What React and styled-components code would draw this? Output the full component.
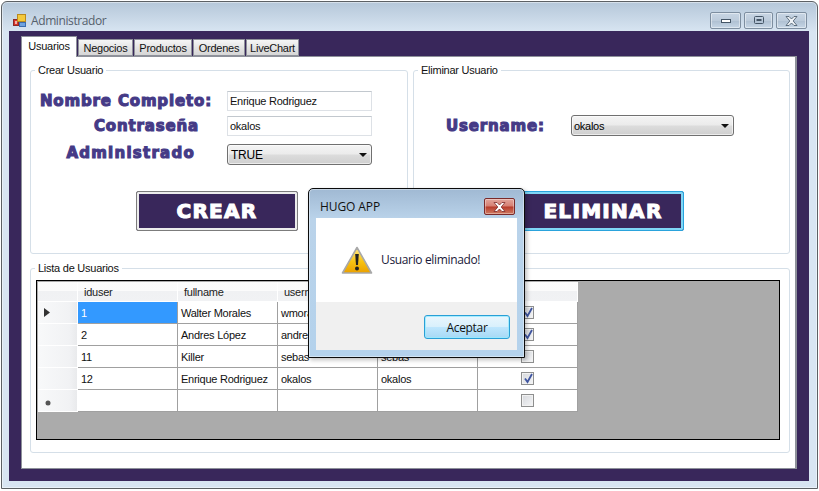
import React from "react";
import styled, { createGlobalStyle } from "styled-components";

const Global = createGlobalStyle`
  html, body { margin: 0; padding: 0; background: #fff; }
  * { box-sizing: border-box; }
  body { font-family: "Liberation Sans", Arial, sans-serif; font-size: 11px; letter-spacing: -.25px; color: #000; }
`;

const Page = styled.div`
  width: 819px; height: 491px; padding: 1px 0 0 1px; overflow: hidden; position: relative;
`;
const Win = styled.div`
  width: 817px; height: 488px; display: flex; flex-direction: column;
  border: 1px solid #5c6064; border-radius: 6px 6px 0 0;
  background: linear-gradient(#b5c7d9 0, #d8e5f2 30px, #d8e5f2 100%);
  box-shadow: inset 0 0 0 1px rgba(255,255,255,.45);
`;
const TitleBar = styled.div`
  height: 29px; flex: none; display: flex; align-items: center; padding: 8px 10px 0 11px;
`;
const TitleText = styled.span`
  font: 12px "Open Sans", sans-serif; letter-spacing: -.4px; color: #55606c; margin-left: 4px;
`;
const WinButtons = styled.div`
  margin-left: auto; display: flex; gap: 3px;
`;
const WinButton = styled.div`
  width: ${p => p.$w}px; height: 17px; display: flex; align-items: center; justify-content: center;
  border: 1px solid #7d8ea0; border-radius: 2px;
  background: linear-gradient(#c8d6e4 0, #bccbdb 50%, #aebfd1 51%, #c6d6e6 100%);
  box-shadow: inset 0 0 0 1px rgba(255,255,255,.45);
`;
const Client = styled.div`
  flex: none; height: 450px; margin: 0 8px 0 7px; background: #39275b;
  padding: 5px 12px 12px 12px; display: flex; flex-direction: column;
`;
const TabStrip = styled.div`
  display: flex; align-items: flex-end; height: 20px; flex: none; gap: 1px; position: relative; z-index: 1;
`;
const Tab = styled.div`
  height: ${p => (p.$active ? 21 : 17)}px; width: ${p => p.$w}px;
  display: flex; align-items: center; justify-content: center;
  border: 1px solid #8e919a; border-bottom: ${p => (p.$active ? "none" : "1px solid #8e919a")};
  background: ${p => (p.$active ? "#fff" : "linear-gradient(#f6f6f6, #e4e4e4 50%, #d6d6d6)")};
  margin-bottom: ${p => (p.$active ? -1 : 0)}px;
  padding-bottom: ${p => (p.$active ? 3 : 0)}px;
  color: #111;
`;
const TabPage = styled.div`
  flex: none; height: 413px; background: #fff; border: 1px solid #8e919a; border-right-width: 2px;
  padding: 6px 6px 0 8px; display: flex; flex-direction: column;
`;
const TopRow = styled.div`
  display: flex; gap: 5px; height: 191px; flex: none;
`;
const Group = styled.fieldset`
  margin: 0; padding: 0; min-width: 0; width: ${p => p.$w}px; height: ${p => p.$h}px;
  border: 1px solid #d5dfe8; border-radius: 3px; position: relative; flex: none;
`;
const Legend = styled.legend`
  margin-left: 4px; padding: 0 3px; font-size: 11px; line-height: 14px; height: 14px; color: #111;
`;
const FormGrid = styled.div`
  display: grid; grid-template-columns: 172px 145px; column-gap: 15px; padding: 14px 0 0 9px;
  grid-template-rows: 20px 20px 24px; row-gap: 5px; align-items: center;
`;
const DisplayLabel = styled.label`
  font: 800 15px "DejaVu Sans", sans-serif; color: #453a86; white-space: nowrap;
  -webkit-text-stroke: 1.1px #453a86; letter-spacing: ${p => p.$ls || 0.85}px;
  justify-self: end; margin-right: ${p => p.$inset || 0}px;
`;
const TextBox = styled.div`
  height: 20px; border: 1px solid #dde1e6; border-top-color: #c2c8ce; padding: 0 2px; line-height: 18px; background: #fff; color: #111;
`;
const Combo = styled.div`
  height: 21px; width: ${p => p.$w}px; border: 1px solid #707070; border-radius: 3px;
  display: flex; align-items: center; justify-content: space-between; padding: 0 4px 0 ${p => p.$pad}px;
  font-size: ${p => p.$size || 11}px; align-self: end;
  background: linear-gradient(#f4f4f4 0, #ebebeb 48%, #dcdcdc 52%, #cfcfcf 100%);
  box-shadow: inset 0 0 0 1px rgba(255,255,255,.6);
`;
const Arrow = styled.span`
  width: 0; height: 0; border: 4px solid transparent; border-top: 4px solid #111; border-bottom: none;
`;
const ActionRow = styled.div`
  display: flex; padding-left: ${p => p.$left}px; margin-top: ${p => p.$top}px;
`;
const ActionButton = styled.div`
  width: 162px; height: 40px; display: flex; align-items: center; justify-content: center;
  background: #39275b; color: #fff;
  font: 800 20px "DejaVu Sans", sans-serif; letter-spacing: 1.3px; -webkit-text-stroke: 1.1px #fff;
  border: 1px solid ${p => (p.$focus ? "#2aa3dc" : "#7c7c7c")};
  box-shadow: inset 0 0 0 ${p => (p.$focus ? "2px #7fd6f6" : "2px #ececec")};
  padding: 2px;
  border-radius: 2px;
`;
const UserRow = styled.div`
  display: flex; align-items: center; padding: 38px 0 0 32px; gap: 26px;
`;
const ListGroup = styled(Group)`
  margin-top: 7px;
`;
const GridBox = styled.div`
  margin: 5px 0 0 5px; width: 744px; height: 160px; background: #ababab; border: 1px solid #000; padding: 1px;
`;
const Rows = styled.div`
  display: grid; width: 540px; grid-template-columns: 40px 100px 100px 100px 100px 100px;
  grid-template-rows: 20px repeat(5, 22px);
`;
const Head = styled.div`
  padding: 2px 0 0 6px; line-height: 16px; color: #222;
  background: linear-gradient(#fcfcfc 0, #fbfbfb 45%, #f0f1f3 50%, #f1f2f4 100%);
  border-right: 1px solid #fff; border-bottom: 1px solid #fff;
`;
const RowHead = styled.div`
  display: flex; align-items: center; padding-left: 6px;
  background: linear-gradient(90deg, #f8f9fa 0, #f1f2f4 80%, #e9eaec 100%);
  border-bottom: 1px solid #fff; border-right: 1px solid #fff;
`;
const Cell = styled.div`
  padding: 0 0 0 3px; line-height: 23px; white-space: nowrap; overflow: hidden;
  background: ${p => (p.$sel ? "#3399ff" : "#fff")}; color: ${p => (p.$sel ? "#fff" : "#111")};
  border-right: 1px solid #a0a0a0; border-bottom: 1px solid #a0a0a0;
`;
const CheckCell = styled(Cell)`
  display: flex; align-items: center; justify-content: center; padding: 0;
`;
const Box = styled.div`
  width: 13px; height: 13px; border: 1px solid #8e8f8f; position: relative;
  background: linear-gradient(135deg, #d6d8dc, #f4f5f7);
  box-shadow: inset 0 0 0 1px #f2f2f2;
`;
const Dialog = styled.div`
  position: absolute; left: 308px; top: 188px; width: 217px; height: 170px;
  border: 1px solid #0b0b0b; border-radius: 5px 5px 0 0; padding: 0 7px 7px;
  background: linear-gradient(#a0b9d3 0, #bad3ea 30px, #b4d2ec 100%);
  box-shadow: 2px 2px 4px rgba(0,0,0,.25), inset 0 0 0 1px rgba(255,255,255,.4);
  display: flex; flex-direction: column;
`;
const DialogTitle = styled.div`
  height: 29px; flex: none; display: flex; align-items: center; justify-content: space-between;
  padding: 6px 2px 0 4px; font: 12px "Open Sans", sans-serif; letter-spacing: -.1px; color: #111;
`;
const CloseBtn = styled.div`
  width: 31px; height: 17px; border: 1px solid #7a2a2a; border-radius: 2px; display: flex; align-items: center; justify-content: center;
  background: linear-gradient(#e2a59c 0, #d67f72 48%, #b73a2a 52%, #cf7b63 100%);
  box-shadow: inset 0 0 0 1px rgba(255,255,255,.35);
`;
const DialogBody = styled.div`
  flex: 1; background: #fff; display: flex; flex-direction: column;
`;
const Message = styled.div`
  height: 84px; flex: none; display: flex; align-items: flex-start; padding: 28px 0 0 25px; gap: 8px;
  font: 12px "Open Sans", sans-serif; letter-spacing: -.35px;
`;
const MessageText = styled.span`
  margin-top: 6px; line-height: 16px; color: #1a1a3a;
`;
const DialogFoot = styled.div`
  flex: 1; background: #f0f0f0; display: flex; justify-content: flex-end; align-items: flex-start; padding: 13px 7px 0 0;
`;
const OkButton = styled.div`
  width: 86px; height: 24px; border: 1px solid #2a9fd6; border-radius: 3px;
  display: flex; align-items: center; justify-content: center; font: 12px "Open Sans", sans-serif; letter-spacing: -.3px; color: #111;
  background: linear-gradient(#eaf6fd 0, #d9f0fc 48%, #bee6fd 52%, #a7d9f5 100%);
  box-shadow: inset 0 0 0 1px rgba(150,235,255,.8);
`;

const AppIcon = () => (
  <svg width="14" height="14" viewBox="0 0 14 14">
    <rect x="0.5" y="5.5" width="5" height="6" fill="#d8352a" stroke="#8a2a2a" />
    <rect x="4.5" y="0.5" width="8" height="7" fill="#f4c93c" stroke="#b98a20" />
    <rect x="6.5" y="8.5" width="6" height="4" fill="#6fa3e0" stroke="#3c6cb0" />
    <rect x="2" y="7" width="2" height="3" fill="#fff" opacity=".6" />
  </svg>
);
const MinIcon = () => (
  <svg width="12" height="6" viewBox="0 0 12 6"><rect x="1.5" y="1.5" width="9" height="3" fill="#fff" stroke="#445566" /></svg>
);
const MaxIcon = () => (
  <svg width="10" height="9" viewBox="0 0 10 9"><rect x="0.5" y="0.5" width="9" height="7" rx="1" fill="none" stroke="#445566" /><rect x="2.5" y="3" width="5" height="2" fill="#445566" /></svg>
);
const XIcon = ({ color = "#445566", fill = "#eef2f6" }) => (
  <svg width="13" height="10" viewBox="0 0 13 10">
    <path d="M1 0.5 H4 L6.5 3 L9 0.5 H12 L8.2 5 L12 9.5 H9 L6.5 7 L4 9.5 H1 L4.8 5 Z" fill={fill} stroke={color} strokeWidth="0.8" />
  </svg>
);
const RowArrow = () => (
  <svg width="6" height="9" viewBox="0 0 6 9"><path d="M0 0 L6 4.5 L0 9 Z" fill="#333" /></svg>
);
const NewRowMark = () => (
  <svg width="6" height="6" viewBox="0 0 6 6" style={{ marginLeft: 1, marginTop: 4 }}><circle cx="3" cy="3" r="2.5" fill="#555" /></svg>
);
const Warning = () => (
  <svg width="32" height="29" viewBox="0 0 32 29">
    <defs>
      <linearGradient id="w" x1="0" y1="0" x2="0" y2="1">
        <stop offset="0" stopColor="#ffe98a" />
        <stop offset=".55" stopColor="#f8c312" />
        <stop offset="1" stopColor="#eaa000" />
      </linearGradient>
    </defs>
    <path d="M16 1.5 L30.5 27 H1.5 Z" fill="url(#w)" stroke="#a8a8a8" strokeWidth="1.6" strokeLinejoin="round" />
    <path d="M14.2 8 H17.8 L17 19 H15 Z" fill="#222" />
    <circle cx="16" cy="22.5" r="2" fill="#222" />
  </svg>
);
const Check = () => (
  <svg width="11" height="11" viewBox="0 0 11 11" style={{ position: "absolute", left: 1, top: 0 }}>
    <path d="M2 5.5 L4.5 9 L9 1" fill="none" stroke="#3f55a0" strokeWidth="1.8" />
  </svg>
);

const users = [
  ["1", "Walter Morales", "wmorales", "wmorales", true],
  ["2", "Andres López", "andres", "andres", true],
  ["11", "Killer", "sebas", "sebas", false],
  ["12", "Enrique Rodriguez", "okalos", "okalos", true],
  ["", "", "", "", false],
];

export default function App() {
  return (
    <Page>
      <Global />
      <Win>
        <TitleBar>
          <AppIcon />
          <TitleText>Administrador</TitleText>
          <WinButtons>
            <WinButton $w={31}><MinIcon /></WinButton>
            <WinButton $w={29}><MaxIcon /></WinButton>
            <WinButton $w={31}><XIcon /></WinButton>
          </WinButtons>
        </TitleBar>
        <Client>
          <TabStrip>
            <Tab $active $w={56}>Usuarios</Tab>
            <Tab $w={55}>Negocios</Tab>
            <Tab $w={58}>Productos</Tab>
            <Tab $w={52}>Ordenes</Tab>
            <Tab $w={53}>LiveChart</Tab>
          </TabStrip>
          <TabPage>
            <TopRow>
              <Group $w={378} $h={191}>
                <Legend>Crear Usuario</Legend>
                <FormGrid>
                  <DisplayLabel>Nombre Completo:</DisplayLabel>
                  <TextBox>Enrique Rodriguez</TextBox>
                  <DisplayLabel $inset={13}>Contraseña</DisplayLabel>
                  <TextBox>okalos</TextBox>
                  <DisplayLabel $inset={17} $ls={1.25}>Administrado</DisplayLabel>
                  <Combo $w={145} $pad={3} $size={12}>TRUE<Arrow /></Combo>
                </FormGrid>
                <ActionRow $left={105} $top={26}>
                  <ActionButton>CREAR</ActionButton>
                </ActionRow>
              </Group>
              <Group $w={377} $h={191}>
                <Legend>Eliminar Usuario</Legend>
                <UserRow>
                  <DisplayLabel>Username:</DisplayLabel>
                  <Combo $w={163} $pad={2}>okalos<Arrow /></Combo>
                </UserRow>
                <ActionRow $left={108} $top={55}>
                  <ActionButton $focus>ELIMINAR</ActionButton>
                </ActionRow>
              </Group>
            </TopRow>
            <ListGroup $w={760} $h={192}>
              <Legend>Lista de Usuarios</Legend>
              <GridBox>
                <Rows>
                  <Head />
                  <Head>iduser</Head>
                  <Head>fullname</Head>
                  <Head>username</Head>
                  <Head>password</Head>
                  <Head>admin</Head>
                  {users.map((u, i) => (
                    <React.Fragment key={i}>
                      <RowHead>
                        {i === 0 && <RowArrow />}
                        {i === 4 && <NewRowMark />}
                      </RowHead>
                      <Cell $sel={i === 0}>{u[0]}</Cell>
                      <Cell>{u[1]}</Cell>
                      <Cell>{u[2]}</Cell>
                      <Cell>{u[3]}</Cell>
                      <CheckCell><Box>{u[4] && <Check />}</Box></CheckCell>
                    </React.Fragment>
                  ))}
                </Rows>
              </GridBox>
            </ListGroup>
          </TabPage>
        </Client>
      </Win>
      <Dialog>
        <DialogTitle>
          <span>HUGO APP</span>
          <CloseBtn><XIcon color="#7a2a2a" fill="#fff" /></CloseBtn>
        </DialogTitle>
        <DialogBody>
          <Message>
            <Warning />
            <MessageText>Usuario eliminado!</MessageText>
          </Message>
          <DialogFoot><OkButton>Aceptar</OkButton></DialogFoot>
        </DialogBody>
      </Dialog>
    </Page>
  );
}
